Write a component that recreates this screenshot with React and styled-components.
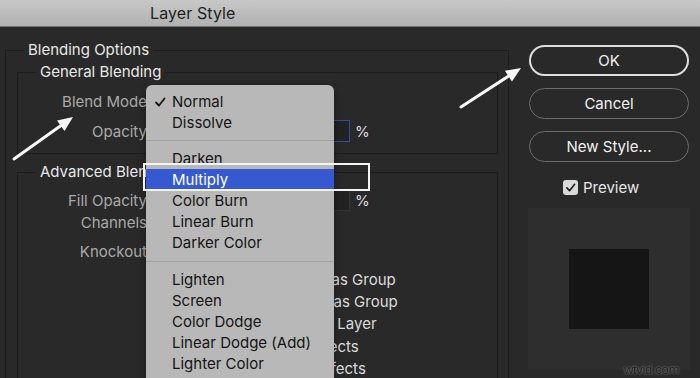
import React from "react";
import styled, { createGlobalStyle } from "styled-components";

const GlobalStyle = createGlobalStyle`
  html, body { margin: 0; padding: 0; background: #292929; }
  body { font-family: Inter, "Noto Sans", "DejaVu Sans", sans-serif; }
  * { box-sizing: border-box; }
`;

const Frame = styled.div`
  position: relative;
  width: 700px;
  height: 378px;
  overflow: hidden;
  background: #292929;
  display: flex;
  flex-direction: column;
`;

const TitleBar = styled.div`
  height: 27px;
  flex-shrink: 0;
  background: linear-gradient(#c8c8c8, #b1b1b1);
  border-bottom: 1px solid #707070;
  display: flex;
  align-items: center;
  padding-left: 150px;
`;

const Title = styled.span`
  font-size: 16px;
  color: #1f1f1f;
  letter-spacing: 0.1px;
`;

const Body = styled.div`
  flex: 1;
  display: flex;
  padding-left: 5px;
  overflow: hidden;
`;

const Group = styled.fieldset`
  margin: ${(p) => p.$mt || 0}px 0 0 0;
  min-width: 0;
  border: 1px solid #1c1c1c;
  padding: ${(p) => p.$pad};
  width: ${(p) => p.$w}px;
  ${(p) => (p.$tall ? "min-height: 420px;" : "")}
  flex-shrink: 0;
`;

const Legend = styled.legend`
  padding: 0 4px;
  margin-left: ${(p) => p.$indent}px;
  font-size: 15px;
  line-height: 18px;
  color: #e8e8e8;
`;

const FieldRow = styled.div`
  display: flex;
  align-items: center;
  height: ${(p) => p.$h || 22}px;
  margin-top: ${(p) => p.$mt || 0}px;
`;

const Label = styled.span`
  width: 129px;
  flex-shrink: 0;
  text-align: right;
  font-size: 15px;
  color: #a9a9a9;
  margin-right: 7px;
  white-space: nowrap;
`;

const SelectBox = styled.div`
  width: 170px;
  height: 22px;
  border-radius: 5px;
  background: #3a3a3a;
  color: #e0e0e0;
  font-size: 14px;
  padding-left: 8px;
  display: flex;
  align-items: center;
`;

const Slider = styled.div`
  width: 142px;
  height: 4px;
  border-radius: 2px;
  background: #555;
  margin-right: 8px;
`;

const NumInput = styled.div`
  width: 46px;
  height: 22px;
  background: #222;
  border: ${(p) => (p.$active ? "1.5px solid #2e4f9e" : "1px solid #343434")};
  color: #ddd;
  font-size: 14px;
  padding-left: 4px;
  display: flex;
  align-items: center;
`;

const Unit = styled.span`
  margin-left: 5px;
  font-size: 15px;
  color: #dedede;
`;

const ChannelBox = styled.span`
  width: 13px;
  height: 13px;
  border-radius: 3px;
  background: #ddd;
  margin-right: 24px;
`;

const CheckList = styled.div`
  display: flex;
  flex-direction: column;
  margin-top: 6px;
  padding-left: 140px;
`;

const CheckRow = styled.div`
  height: 22.3px;
  display: flex;
  align-items: center;
  font-size: 15px;
  color: #dcdcdc;
  white-space: nowrap;
  gap: 8px;
`;

const SmallBox = styled.span`
  width: 13px;
  height: 13px;
  border-radius: 3px;
  background: #5a5a5a;
  flex-shrink: 0;
`;

const SidePanel = styled.div`
  flex: 1;
  display: flex;
  flex-direction: column;
  padding: 18px 0 0 20px;
`;

const ButtonStack = styled.div`
  display: flex;
  flex-direction: column;
  gap: 12px;
`;

const PillButton = styled.button`
  width: 160px;
  height: 31px;
  border-radius: 16px;
  background: transparent;
  border: ${(p) => (p.$primary ? "2px solid #dedede" : "1px solid #6c6c6c")};
  color: #f0f0f0;
  font-family: inherit;
  font-size: 15px;
  padding: 0;
`;

const PreviewToggle = styled.div`
  margin-top: 15px;
  height: 20px;
  display: flex;
  align-items: center;
  padding-left: 34px;
  gap: 5px;
  font-size: 15px;
  color: #e6e6e6;
`;

const CheckBox = styled.span`
  width: 15px;
  height: 15px;
  border-radius: 3px;
  background: #dadada;
  display: flex;
  align-items: center;
  justify-content: center;
`;

const PreviewWell = styled.div`
  margin: 11px 0 0 -1px;
  width: 162px;
  height: 162px;
  background: #2e2e2e;
  display: flex;
  align-items: center;
  justify-content: center;
`;

const Swatch = styled.div`
  width: 80px;
  height: 80px;
  background: #151515;
`;

const Menu = styled.div`
  position: absolute;
  left: 146px;
  top: 85px;
  width: 188px;
  height: 300px;
  background: #b8b8b8;
  border-radius: 6px 6px 0 0;
  padding-top: 6px;
  display: flex;
  flex-direction: column;
  box-shadow: 0 2px 8px rgba(0, 0, 0, 0.35);
`;

const MenuItem = styled.div`
  height: 21px;
  flex-shrink: 0;
  display: flex;
  align-items: center;
  font-size: 15px;
  color: ${(p) => (p.$hl ? "#ffffff" : "#141414")};
  background: ${(p) => (p.$hl ? "#3459d0" : "transparent")};
  white-space: nowrap;
`;

const CheckCol = styled.span`
  width: 26px;
  flex-shrink: 0;
  display: flex;
  justify-content: center;
  padding-left: 2px;
`;

const Separator = styled.div`
  height: ${(p) => p.$h}px;
  flex-shrink: 0;
  display: flex;
  align-items: center;
  &::before {
    content: "";
    flex: 1;
    height: 1px;
    background: #a0a0a0;
  }
`;

const Callout = styled.div`
  position: absolute;
  left: 143px;
  top: 163px;
  width: 227px;
  height: 28px;
  border: 2.5px solid #f4f4f4;
`;

const Overlay = styled.svg`
  position: absolute;
  left: 0;
  top: 0;
  pointer-events: none;
`;

const Watermark = styled.span`
  position: absolute;
  right: 21px;
  bottom: 1px;
  font-family: "Liberation Sans", Arial, sans-serif;
  font-size: 13px;
  letter-spacing: -0.3px;
  color: #1d1d1d;
  text-shadow: 0 0 2px rgba(255, 255, 255, 0.55);
`;

function Arrow({ x1, y1, x2, y2 }) {
  const dx = x2 - x1;
  const dy = y2 - y1;
  const len = Math.hypot(dx, dy);
  const ux = dx / len;
  const uy = dy / len;
  const hl = 15;
  const hw = 6.5;
  const bx = x2 - ux * hl;
  const by = y2 - uy * hl;
  const pts = `${x2},${y2} ${bx - uy * hw},${by + ux * hw} ${bx + uy * hw},${by - ux * hw}`;
  return (
    <g>
      <line x1={x1} y1={y1} x2={bx + ux * 2} y2={by + uy * 2} stroke="#f7f7f7" strokeWidth="3" strokeLinecap="round" />
      <polygon points={pts} fill="#f7f7f7" />
    </g>
  );
}

const Tick = ({ color = "#141414", size = 12 }) => (
  <svg width={size} height={size} viewBox="0 0 12 12">
    <polyline points="2,6.5 5,9.5 10.5,2.5" fill="none" stroke={color} strokeWidth="1.8" strokeLinecap="round" strokeLinejoin="round" />
  </svg>
);

const menuGroups = [
  { items: ["Normal", "Dissolve"], sep: 15 },
  { items: ["Darken", "Multiply", "Color Burn", "Linear Burn", "Darker Color"], sep: 16 },
  { items: ["Lighten", "Screen", "Color Dodge", "Linear Dodge (Add)", "Lighter Color"] },
];

const checks = [
  "Blend Interior Effects as Group",
  "Blend Clipped Layers as Group",
  "Transparency Shapes Layer",
  "Layer Mask Hides Effects",
  "Vector Mask Hides Effects",
];

export default function App() {
  return (
    <>
      <GlobalStyle />
      <Frame>
        <TitleBar>
          <Title>Layer Style</Title>
        </TitleBar>
        <Body>
          <Group $w={504} $mt={14} $pad="4px 10px 0 11px" $tall>
            <Legend $indent={7}>Blending Options</Legend>
            <Group $w={481} $pad="8px 0 10px 0">
              <Legend $indent={18}>General Blending</Legend>
              <FieldRow $h={24}>
                <Label>Blend Mode</Label>
                <SelectBox>Multiply</SelectBox>
              </FieldRow>
              <FieldRow $h={24} $mt={6}>
                <Label>Opacity</Label>
                <Slider />
                <NumInput $active>100</NumInput>
                <Unit>%</Unit>
              </FieldRow>
            </Group>
            <Group $w={481} $mt={9} $pad="8px 0 0 0" $tall>
              <Legend $indent={18}>Advanced Blending</Legend>
              <FieldRow>
                <Label>Fill Opacity</Label>
                <Slider />
                <NumInput>100</NumInput>
                <Unit>%</Unit>
              </FieldRow>
              <FieldRow>
                <Label>Channels</Label>
                <ChannelBox />
                <ChannelBox />
                <ChannelBox />
              </FieldRow>
              <FieldRow $mt={7}>
                <Label>Knockout</Label>
                <SelectBox>None</SelectBox>
              </FieldRow>
              <CheckList>
                {checks.map((c) => (
                  <CheckRow key={c}>
                    <SmallBox />
                    {c}
                  </CheckRow>
                ))}
              </CheckList>
            </Group>
          </Group>
          <SidePanel>
            <ButtonStack>
              <PillButton $primary>OK</PillButton>
              <PillButton>Cancel</PillButton>
              <PillButton>New Style...</PillButton>
            </ButtonStack>
            <PreviewToggle>
              <CheckBox>
                <Tick color="#1c1c1c" size={11} />
              </CheckBox>
              Preview
            </PreviewToggle>
            <PreviewWell>
              <Swatch />
            </PreviewWell>
          </SidePanel>
        </Body>

        <Menu>
          {menuGroups.map((g, gi) => (
            <React.Fragment key={gi}>
              {g.items.map((it) => (
                <MenuItem key={it} $hl={it === "Multiply"}>
                  <CheckCol>{it === "Normal" ? <Tick /> : null}</CheckCol>
                  {it}
                </MenuItem>
              ))}
              {g.sep ? <Separator $h={g.sep} /> : null}
            </React.Fragment>
          ))}
        </Menu>

        <Callout />

        <Overlay width="700" height="378" viewBox="0 0 700 378">
          <Arrow x1={14} y1={159} x2={73} y2={117} />
          <Arrow x1={461} y1={107} x2={521} y2={68} />
        </Overlay>

        <Watermark>wtvid.com</Watermark>
      </Frame>
    </>
  );
}
